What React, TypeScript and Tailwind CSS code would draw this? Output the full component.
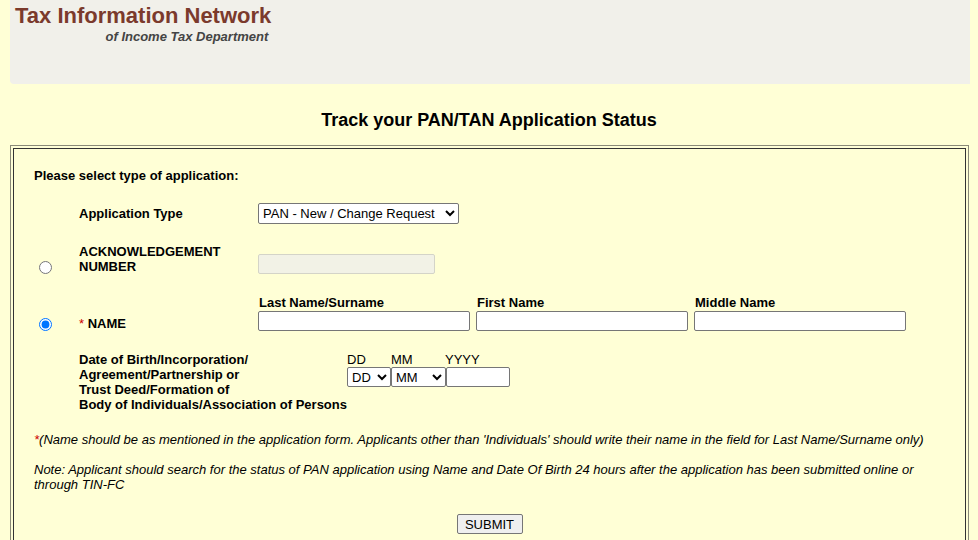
import React from 'react';

const field = 'h-[20px] border border-[#767676] bg-white rounded-[2px] px-[2px] text-[13px]';
const sel = 'h-[20px] border border-[#767676] bg-white rounded-[2px] text-[13px] text-black';

export default function App() {
  return (
    <div className="min-h-screen bg-[#ffffd6] text-black font-['Liberation_Sans',Arial,sans-serif]">
      {/* Header */}
      <div className="ml-[10px] mr-[8px] h-[84px] bg-[#f1f0ea] rounded-bl-[4px] pl-[5px] pt-[3px]">
        <div className="inline-flex flex-col items-end">
          <div className="text-[22px] font-bold leading-[25px] text-[#7b3a2c]">Tax Information Network</div>
          <div className="text-[13px] font-bold italic leading-[15px] text-[#444] pr-[3px] pt-[1px]">of Income Tax Department</div>
        </div>
      </div>

      <h1 className="mt-[26px] text-center text-[18px] font-bold leading-[21px]">
        Track your PAN/TAN Application Status
      </h1>

      {/* Form box */}
      <div className="mt-[14px] ml-[10px] mr-[9px] border border-[#8a8a78] p-[2px]">
        <div className="border border-[#333] pl-[20px] pt-[19px] pb-[20px] text-[13px] leading-[15px]">
          <div className="font-bold">Please select type of application:</div>

          {/* Application type */}
          <div className="mt-[20px] flex items-center h-[21px]">
            <div className="w-[45px]" />
            <div className="w-[179px] font-bold">Application Type</div>
            <select className={`${sel} w-[201px] h-[21px]`} defaultValue="pan">
              <option value="pan">PAN - New / Change Request</option>
              <option value="tan">TAN - New / Change Request</option>
            </select>
          </div>

          {/* Acknowledgement */}
          <div className="mt-[20px] flex items-end">
            <div className="w-[45px] flex">
              <input type="radio" name="mode" className="m-0 ml-[5px] w-[13px] h-[13px]" />
            </div>
            <div className="w-[179px] font-bold">
              ACKNOWLEDGEMENT
              <br />
              NUMBER
            </div>
            <input
              disabled
              className="h-[20px] w-[177px] border border-[#d4d4c8] bg-[#f2f2e6] rounded-[2px]"
            />
          </div>

          {/* Name */}
          <div className="mt-[21px] flex items-end">
            <div className="w-[45px] flex">
              <input type="radio" name="mode" defaultChecked className="m-0 ml-[5px] w-[13px] h-[13px]" />
            </div>
            <div className="w-[179px] font-bold">
              <span className="text-[#c00] font-normal">*</span> NAME
            </div>
            <div className="flex gap-[6px]">
              {['Last Name/Surname', 'First Name', 'Middle Name'].map((l) => (
                <div key={l} className="flex flex-col w-[212px]">
                  <span className="font-bold pl-[1px]">{l}</span>
                  <input className={`${field} mt-[1px] w-[212px]`} />
                </div>
              ))}
            </div>
          </div>

          {/* Date of birth */}
          <div className="mt-[21px] flex items-start">
            <div className="w-[45px]" />
            <div className="w-[268px] font-bold">
              Date of Birth/Incorporation/
              <br />
              Agreement/Partnership or
              <br />
              Trust Deed/Formation of
              <br />
              Body of Individuals/Association of Persons
            </div>
            <div className="flex flex-col">
              <div className="flex">
                <span className="w-[44px]">DD</span>
                <span className="w-[54px]">MM</span>
                <span>YYYY</span>
              </div>
              <div className="flex">
                <select className={`${sel} w-[44px]`} defaultValue="DD">
                  <option>DD</option>
                </select>
                <select className={`${sel} w-[55px]`} defaultValue="MM">
                  <option>MM</option>
                </select>
                <input className={`${field} w-[64px]`} />
              </div>
            </div>
          </div>

          <p className="mt-[20px] italic">
            <span className="text-[#c00]">*</span>(Name should be as mentioned in the application form. Applicants other than
            'Individuals' should write their name in the field for Last Name/Surname only)
          </p>

          <p className="mt-[15px] italic pr-[40px]">
            Note: Applicant should search for the status of PAN application using Name and Date Of Birth 24 hours after
            the application has been submitted online or through TIN-FC
          </p>

          <div className="mt-[22px] flex justify-center pr-[20px]">
            <button className="h-[20px] w-[66px] border border-[#767676] bg-[#efefef] rounded-[2px] text-[13px]">
              SUBMIT
            </button>
          </div>
        </div>
      </div>
    </div>
  );
}
